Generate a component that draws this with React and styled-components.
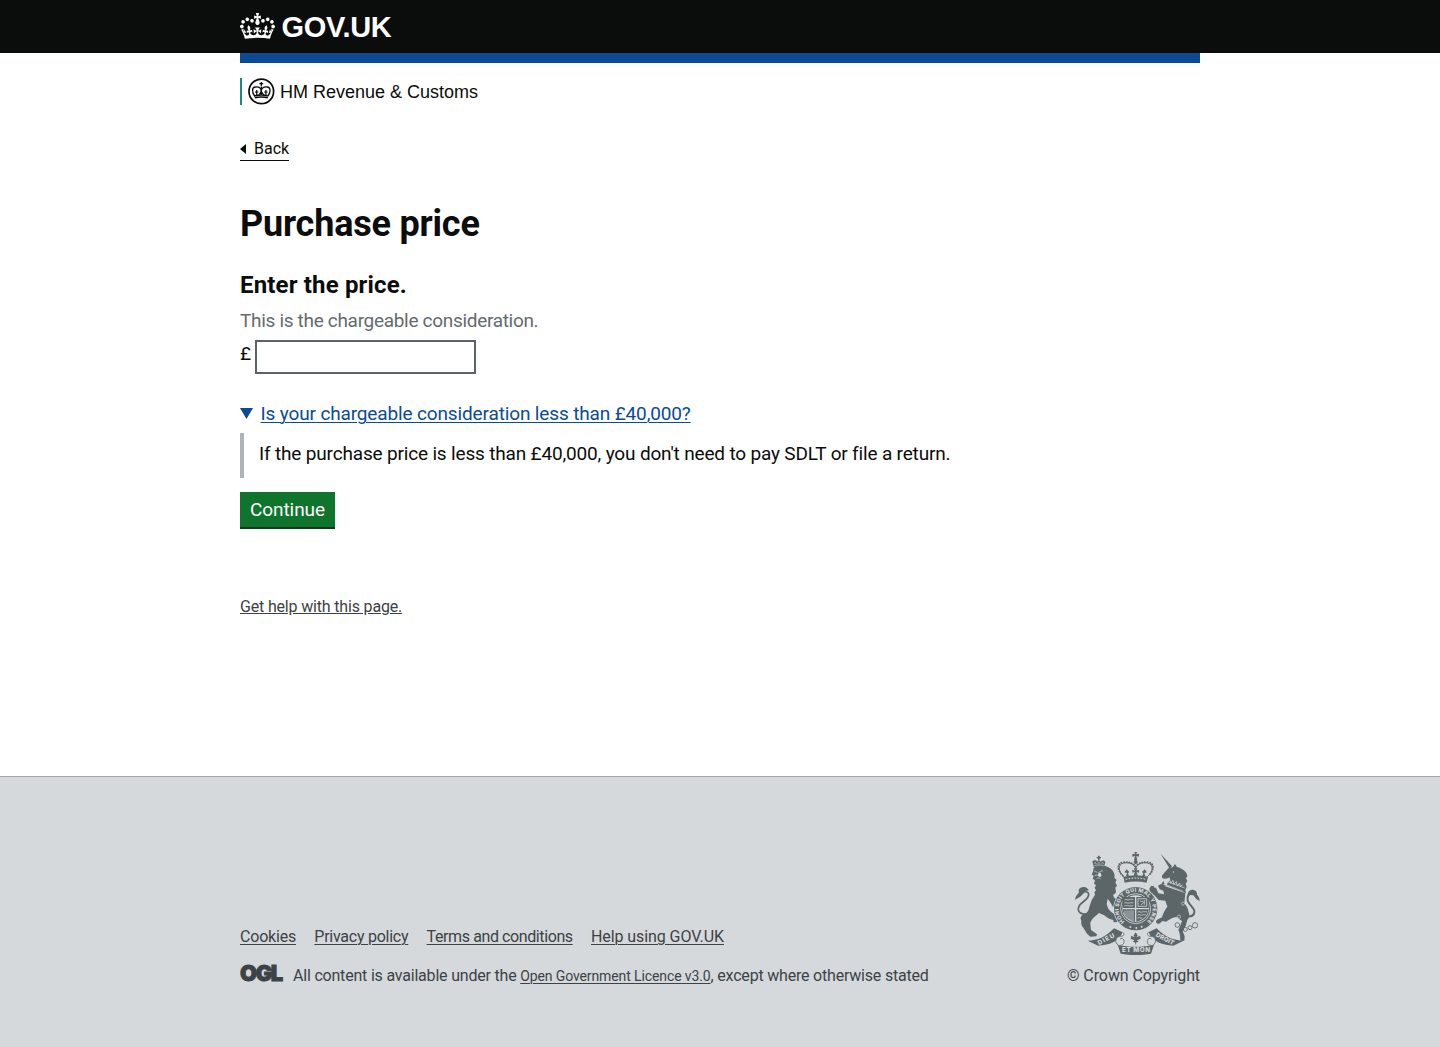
import React from 'react';
import styled, { createGlobalStyle } from 'styled-components';

const GlobalStyle = createGlobalStyle`
  *, *::before, *::after { box-sizing: border-box; }
  body {
    margin: 0;
    background: #fff;
    color: #0b0c0c;
    font-family: Roboto, "Liberation Sans", sans-serif;
    -webkit-font-smoothing: antialiased;
  }
  h1, h2, p, ul { margin: 0; padding: 0; }
`;

const Page = styled.div`
  display: flex;
  flex-direction: column;
  min-height: 1047px;
`;

const Container = styled.div`
  width: 960px;
  margin: 0 auto;
`;

const Header = styled.header`
  height: 53px;
  background: #0b0c0c;
`;

const LogoLink = styled.a`
  display: flex;
  align-items: flex-start;
  gap: 6.5px;
  padding-top: 13px;
  color: #fff;
  text-decoration: none;
`;

const LogoText = styled.span`
  font: 700 29px/28px "Liberation Sans", Arial, sans-serif;
  letter-spacing: -0.3px;
`;

const BlueBar = styled.div`
  height: 10px;
  background: #0b4b94;
`;

const Organisation = styled.div`
  display: flex;
  align-items: center;
  gap: 5px;
  height: 27px;
  margin-top: 15px;
  padding-left: 6px;
  border-left: 2px solid #1a8a83;
`;

const OrganisationName = styled.span`
  padding-top: 2px;
  font: 400 18px/25px "Liberation Sans", Arial, sans-serif;
`;

const BackLink = styled.a`
  display: inline-flex;
  align-items: center;
  gap: 8px;
  height: 24px;
  margin-top: 32px;
  border-bottom: 1px solid #0b0c0c;
  color: #0b0c0c;
  font-size: 16px;
  line-height: 22px;
  text-decoration: none;
`;

const Arrow = styled.span`
  width: 0;
  height: 0;
  border: 5px solid transparent;
  border-right: 6px solid #0b0c0c;
  border-left-width: 0;
`;

const Title = styled.h1`
  margin-top: 43px;
  font-size: 36px;
  line-height: 40px;
  letter-spacing: -0.2px;
`;

const Question = styled.h2`
  margin-top: 26px;
  font-size: 24px;
  line-height: 30px;
  letter-spacing: 0.16px;
`;

const Hint = styled.p`
  margin-top: 8px;
  color: #646b6f;
  font-size: 19px;
  line-height: 25px;
  letter-spacing: -0.31px;
`;

const PriceField = styled.label`
  display: flex;
  gap: 5px;
  height: 34px;
  margin-top: 7px;
  font-size: 19px;
  line-height: 28px;
`;

const Currency = styled.span`
  width: 10px;
`;

const PriceInput = styled.input`
  width: 221px;
  height: 34px;
  padding: 4px;
  border: 2px solid #5a6468;
  border-radius: 0;
  background: #fff;
  font: inherit;
  outline: 0;
`;

const Summary = styled.div`
  display: flex;
  align-items: center;
  gap: 7.5px;
  height: 25px;
  margin-top: 27px;
  color: #0b4b94;
  font-size: 19px;
  line-height: 25px;
  letter-spacing: -0.14px;
`;

const DownArrow = styled.span`
  width: 13px;
  height: 11px;
  background: #0b4b94;
  clip-path: polygon(0 0, 100% 0, 50% 100%);
`;

const SummaryText = styled.span`
  text-decoration: underline;
  text-decoration-thickness: 1px;
  text-underline-offset: 2px;
`;

const DetailsPanel = styled.div`
  height: 45px;
  margin-top: 7px;
  padding: 8px 0 0 15px;
  border-left: 4px solid #afb3b6;
  font-size: 19px;
  line-height: 25px;
  letter-spacing: -0.17px;
`;

const ContinueButton = styled.button`
  display: block;
  width: 95px;
  height: 35px;
  margin-top: 14px;
  padding: 0;
  border: 0;
  background: #0f752c;
  box-shadow: 0 2px 0 #0a3c18;
  color: #fff;
  font: 400 19px/35px Roboto, sans-serif;
  letter-spacing: -0.08px;
`;

const HelpLink = styled.a`
  display: inline-block;
  margin-top: 70px;
  color: #3c4245;
  font-size: 16px;
  line-height: 20px;
  letter-spacing: -0.17px;
  text-decoration: underline;
  text-underline-offset: 1px;
`;

const Footer = styled.footer`
  height: 271px;
  margin-top: auto;
  border-top: 1px solid #a1a6a9;
  background: #d5d9dc;
  color: #3c4245;
  font-size: 16px;
  line-height: 20px;
`;

const FooterInner = styled(Container)`
  display: flex;
  justify-content: space-between;
  align-items: flex-end;
  height: 209px;
`;

const FooterLinks = styled.nav`
  display: flex;
  gap: 18.3px;
  margin-bottom: 16px;
`;

const FooterLink = styled.a`
  color: inherit;
  letter-spacing: ${(p) => p.$tracking || 0}px;
  text-decoration: underline;
  text-decoration-thickness: 1px;
  text-underline-offset: 2px;
`;

const Licence = styled.div`
  display: flex;
  align-items: baseline;
  height: 20px;
  margin-bottom: 3px;
  letter-spacing: -0.2px;
  white-space: pre;
`;

const OglMark = styled.span`
  width: 53px;
  font: 900 22px/20px Inter, sans-serif;
  letter-spacing: -1.4px;
  -webkit-text-stroke: 0.9px #3c4245;
`;

const SmallLink = styled(FooterLink)`
  font-size: 14px;
`;

const Copyright = styled.div`
  display: flex;
  flex-direction: column;
  align-items: flex-end;
  gap: 11px;
  letter-spacing: -0.09px;
`;

const CROWN =
  'M25 30.2c3.5 1.5 7.7-.2 9.1-3.7 1.5-3.6-.2-7.8-3.9-9.2-3.6-1.4-7.6.3-9.1 3.9-1.4 3.5.3 7.5 3.9 9zM9 39.5c3.6 1.5 7.8-.2 9.2-3.7 1.5-3.6-.2-7.8-3.9-9.1-3.6-1.5-7.6.2-9.1 3.8-1.4 3.5.3 7.5 3.8 9zM4.4 57.2c3.5 1.5 7.7-.2 9.1-3.8 1.5-3.6-.2-7.7-3.9-9.1-3.5-1.5-7.6.3-9.1 3.8-1.4 3.5.3 7.6 3.9 9.1zm38.3-21.4c3.5 1.5 7.7-.2 9.1-3.8 1.5-3.6-.2-7.7-3.9-9.1-3.6-1.5-7.6.3-9.1 3.8-1.3 3.6.4 7.7 3.9 9.1zm64.4-5.6c-3.6 1.5-7.8-.2-9.1-3.7-1.5-3.6.2-7.8 3.8-9.2 3.6-1.4 7.7.3 9.2 3.9 1.3 3.5-.4 7.5-3.9 9zm15.9 9.3c-3.6 1.5-7.7-.2-9.1-3.7-1.5-3.6.2-7.8 3.7-9.1 3.6-1.5 7.7.2 9.2 3.8 1.5 3.5-.3 7.5-3.8 9zm4.7 17.7c-3.6 1.5-7.8-.2-9.2-3.8-1.5-3.6.2-7.7 3.9-9.1 3.6-1.5 7.7.3 9.2 3.8 1.3 3.5-.4 7.6-3.9 9.1zM89.3 35.8c-3.6 1.5-7.8-.2-9.2-3.8-1.4-3.6.2-7.7 3.9-9.1 3.6-1.5 7.7.3 9.2 3.8 1.4 3.6-.3 7.7-3.9 9.1zM69.7 17.7l8.9 4.7V9.3l-8.9 2.8c-.2-.3-.5-.6-.9-.9L72.4 0H59.6l3.5 11.2c-.3.3-.6.5-.9.9l-8.8-2.8v13.1l8.8-4.7c.3.3.6.7.9.9l-5 15.4v.1c-.2.8-.4 1.6-.4 2.4 0 4.1 3.1 7.5 7 8.1h.2c.3 0 .7.1 1 .1.4 0 .7 0 1-.1h.2c4-.6 7.1-4.1 7.1-8.1 0-.8-.1-1.7-.4-2.4V34l-5.1-15.4c.4-.2.7-.6 1-.9zM66 92.8c16.9 0 32.8 1.1 47.1 3.2 4-16.9 8.9-26.7 14-33.5l-9.6-3.4c1 4.9 1.1 7.2 0 10.2-1.5-1.4-3-4.3-4.2-8.7L108.6 76c2.8-2 5-3.2 7.5-3.3-4.4 9.4-10 11.9-13.6 11.2-4.3-.8-6.3-4.6-5.6-7.9 1-4.7 5.7-5.9 8-.5 4.3-8.7-3-11.4-7.6-8.8 7.1-7.2 7.9-13.5 2.1-21.1-8 6.1-8.1 12.3-4.5 20.8-4.7-5.4-12.1-2.5-9.5 6.2 3.4-5.2 7.9-2 7.2 3.1-.6 4.3-6.4 7.8-13.5 7.2-10.3-.9-10.9-8-11.2-13.8 2.5-.5 7.1 1.8 11 7.3L80.2 60c-4.1 4.4-8 5.3-12.3 5.4 1.4-4.4 8-11.6 8-11.6H55.5s6.4 7.2 7.9 11.6c-4.2-.1-8-1-12.3-5.4l1.4 16.4c3.9-5.5 8.5-7.7 10.9-7.3-.3 5.8-.9 12.8-11.1 13.8-7.2.6-12.9-2.9-13.5-7.2-.7-5 3.8-8.3 7.1-3.1 2.7-8.7-4.6-11.6-9.4-6.2 3.7-8.5 3.6-14.7-4.6-20.8-5.8 7.6-5 13.9 2.2 21.1-4.7-2.6-11.9.1-7.7 8.8 2.3-5.5 7.1-4.2 8.1.5.7 3.3-1.3 7.1-5.7 7.9-3.5.7-9-1.8-13.5-11.2 2.5.1 4.7 1.3 7.5 3.3l-4.7-15.4c-1.2 4.4-2.7 7.2-4.3 8.7-1.1-3-.9-5.3 0-10.2l-9.5 3.4c5 6.9 9.9 16.7 14 33.5 14.8-2.1 30.8-3.2 47.7-3.2z';

const Crown = () => (
  <svg width="35" height="26" viewBox="0 0 132 97" preserveAspectRatio="none" aria-hidden="true">
    <path d={CROWN} fill="#fff" />
  </svg>
);

const HmrcCrest = () => (
  <svg width="27" height="27" viewBox="0 0 27 27" aria-hidden="true" fill="none" stroke="#0b0c0c">
    <circle cx="13.3" cy="13.4" r="12.3" strokeWidth="1.7" />
    <path d="M13.3 4v4M11.4 5.6h3.8M13.3 8.5v8" strokeWidth="1.3" />
    <path
      d="M7 18.5C3.6 14 3.9 9.6 7 9c3.2-.5 5.6.8 6.300 3.200.7-2.400 3.100-3.700 6.300-3.200 3.100.6 3.400 5 0 9.500"
      strokeWidth="1.3"
    />
    <path d="M6.800 19.800c4.200-1 8.800-1 13 0M7 17.800c4-.9 8.600-.9 12.600 0" strokeWidth="1.500" />
    <path
      d="M8.700 12v5m-1.700-3h3.400M17.900 12v5m-1.700-3h3.400M10.800 17l2.500-3.500 2.500 3.500M13.300 12v5"
      strokeWidth="1.200"
    />
  </svg>
);

const INK = '#5c6669';
const PAPER = '#d5d9dc';

const RoyalArms = () => (
  <svg width="125" height="103" viewBox="45 35 375 309" aria-hidden="true">
    <defs>
      <path id="garter" d="M194 244A51 51 0 1 1 260 244" />
    </defs>
    {/* lion */}
    <g fill={INK}>
      <path d="M101 83c9-7 30-9 43-3 12 5 17 14 20 24l-1 8 7 7-4 7 5 10-5 6 2 12c-2 6-5 8-9 9l4 11c8 0 16 8 18 16 1 7-4 14-8 15l-8-10-6 5-7-12-9-13-3 16c2 12 9 22 19 28 9 6 16 14 14 26l-12 1-1-7c-11-2-20-7-27-14l-16-7-18 16c-4 6-9 11-8 18l2 17 18 13-2 6-18 1-10-9-11-18c-6-5-7-13-6-22-6-8 1-16 9-19 9-3 14-11 15-21l7-20 10-17-2-7 5-6-4-7 4-8-6-5 3-10-7-5 3-8-6-5 4-8z" />
      <path d="M102 82 97 64c5-6 12-5 15 0 1-5 8-5 10 0 4-5 11-4 14 1l-4 16c-10-3-20-3-30 1z" />
      <path d="M114 46h5v14h-5zM110 50h13v4h-13z" />
      <path
        d="M80 222c-18 0-30-8-23-24 6-14 28-18 29-35 0-11-13-11-19-4"
        fill="none"
        stroke={INK}
        strokeWidth="5"
      />
      <path d="M45 178c2-12 8-15 12-22-4-8 2-15 14-16 7-1 13 5 16 11-8-1-14 2-17 8-5 9-14 14-25 19z" />
    </g>
    <g fill="none" stroke={PAPER} strokeWidth="2">
      <path d="m103 93 9 3m7-2 10-3m-12 4-2 11m-11 0c6-4 13-2 19 2M110 114c5-2 9-1 12 1" />
      <path d="M103 76c9-3 19-3 28 0M103 70l3-4 3 5M114 70l3-4 3 4M125 70l3-4 3 4" />
    </g>
    <path d="M117 97h5l3 10-6 3-5-3z" fill={PAPER} />
    {/* unicorn */}
    <g fill={INK}>
      <path d="m302 40 34 38-7 7z" />
      <path d="m338 81 7-10 6 9c17 4 30 15 31 27l-4 7 4 8-5 8 3 9-4 10 2 10-58-24 3-8c5-5 8-11 6-16l-6 3-9 1c-9 1-10-8-5-13l12-14c2-4 8-6 17-7z" />
      <path d="m312 136 64 23-3 30c7 8 11 15 12 24 5 10 4 18-3 26l-5 18-9 16 6 15-1 13-12 1-1-17-4-16 10-27-17-12c-10 1-20 7-31 14l-11-2-7 7c-9 4-16-5-9-11l15-7c4-13 9-23 16-32l-6-18-20-2-17-19c-9-3-14-12-8-20l17 2 7 17 17 3-2-11-11-4-5-11c8-6 18-2 26 0z" />
      <path
        d="M384 228c18 2 25-14 13-27-13-14-20-25-12-36 7-9 20-8 24 6"
        fill="none"
        stroke={INK}
        strokeWidth="6"
      />
      <path d="M419 182c-11-4-15-11-18-17-6 0-12-3-17 3-3-10 2-18 13-20 10 0 15 7 14 15 5 5 8 11 8 19z" />
      <path d="m283 138-12-2 7 12zM284 151l-6 13 10-4zM304 131l6-9 4 10z" />
    </g>
    <g fill="none" stroke={PAPER}>
      <path d="m318 133 52 20M322 124l52 19" strokeWidth="2" />
      <path d="m324 126 5-9 3 12 7-9 3 12 7-8 3 12 7-8 2 11 7-6" strokeWidth="2.4" />
      <circle cx="340" cy="95" r="1.2" strokeWidth="2" />
    </g>
    <g fill="none" stroke={INK} strokeWidth="2.6">
      <circle cx="306" cy="138" r="6" />
      <circle cx="352" cy="254" r="7" />
      <circle cx="363" cy="269" r="6" />
      <circle cx="376" cy="267" r="6" />
      <circle cx="390" cy="262" r="6" />
      <circle cx="405" cy="255" r="8" />
    </g>
    <g fill="none" stroke={PAPER} strokeWidth="2">
      <circle cx="357" cy="229" r="5" />
      <path d="m369 184 5 6-5 6-5-6z" />
    </g>
    {/* shield and garter */}
    <circle cx="227" cy="205" r="67" fill={PAPER} />
    <circle cx="227" cy="205" r="65" fill={INK} />
    <circle cx="227" cy="205" r="45" fill="none" stroke={PAPER} strokeWidth="2.5" />
    <text fill={PAPER} fontFamily="Inter, sans-serif" fontSize="16" fontWeight="800">
      <textPath href="#garter" textLength="248">
        HONI SOIT QUI MAL Y PENSE
      </textPath>
    </text>
    <circle cx="227" cy="205" r="40" fill={PAPER} />
    <path
      d="M190 170h35v33h-37c-1-12-1-22 2-33zM229 170h35c3 11 3 21 2 33h-37zM188 207h37v37c-20-4-34-16-37-37zM229 207h37c-3 21-17 33-37 37z"
      fill={INK}
    />
    <g fill="none" stroke={PAPER} strokeWidth="2.4">
      <path d="M194 179c5-5 9 3 14-1s8 1 12-1M193 188c6-4 11 3 15 0s8 1 12-1M193 197c6-4 11 2 27-1" />
      <path d="M233 215c5-4 9 3 14 0s8 1 14-1M233 224c6-4 11 3 15 0s6 1 9-1M233 233c5-3 9 2 14 0" />
      <path d="M234 175h26v23h-26zM240 181c4 4 8 0 10 4s-4 5-7 9M253 179v14M195 210v16M201 210v24M207 210v29M213 210v31M219 210v32" />
    </g>
    <g fill={PAPER}>
      <circle cx="211" cy="260" r="3" />
      <circle cx="229" cy="263" r="3" />
      <circle cx="245" cy="259" r="3" />
    </g>
    {/* royal crown */}
    <path d="M184 100h86l-8 30c-23-7-47-7-70 0z" fill={PAPER} />
    <g fill={INK}>
      <path d="m223 35h8l-2 7 8-2v9l-8-2 3 13h-10l3-13-8 2v-9l8 2z" />
      <circle cx="227" cy="65" r="6" />
      <path d="M190 109c25-6 49-6 74 0l-4 18c-22-5-44-5-66 0z" />
      <path d="m221 106 3-11-7 2v-9l7 3-2-7h10l-2 7 7-3v9l-7-2 3 11zM198 107l3-9-8-2 7-9 8 8-4 4 3 8zM256 107l-3-9 8-2-7-9-8 8 4 4-3 8z" />
    </g>
    <path
      d="M192 109c-19-16-19-37-1-41 18-3 31 3 36 16M262 109c19-16 19-37 1-41-18-3-31 3-36 16"
      fill="none"
      stroke={INK}
      strokeWidth="3"
    />
    <path
      d="M188 106c-17-17-18-37 1-40 17-2 30 2 38 12 8-10 21-14 38-12 19 3 18 23 1 40"
      fill="none"
      stroke={INK}
      strokeDasharray="0.1 7.6"
      strokeLinecap="round"
      strokeWidth="6"
    />
    <path d="M197 117c20-5 40-5 60 0" fill="none" stroke={PAPER} strokeDasharray="5 4" strokeWidth="3" />
    {/* motto ribbon */}
    <g fill={INK}>
      <path d="M83 301c30 0 54-11 79-37l26 12c-9 24-37 40-74 40z" />
      <path d="M371 301c-30 0-57-11-81-37l-25 12c9 24 40 40 75 40z" />
      <path d="M173 313c36 8 73 8 109 0l-9 27c-30 6-61 6-91 0z" />
    </g>
    <g fill={PAPER} stroke={INK} strokeWidth="2.5">
      <path d="M188 276c7 4 4 12-6 12-12 0-16 8-14 18l6 9c12 2 20-4 18-14-1-7-8-9-12-5" />
      <path d="M266 276c-7 4-4 12 6 12 12 0 16 8 14 18l-6 9c-12 2-20-4-18-14 1-7 8-9 12-5" />
    </g>
    <path
      d="m227 276 6 9-3 6 10-5 2 9-11 5 5 5-7 1-2 9-2-9-7-1 5-5-11-5 2-9 10 5-3-6z"
      fill={INK}
    />
    <g fill={PAPER} fontFamily="Inter, sans-serif" fontWeight="800" fontSize="19" textAnchor="middle">
      <text transform="translate(141 302) rotate(-28)" textLength="54">DIEU</text>
      <text transform="translate(228 335)" textLength="84">ET MON</text>
      <text transform="translate(312 301) rotate(28)" textLength="60">DROIT</text>
    </g>
  </svg>
);

export default function App() {
  return (
    <Page>
      <GlobalStyle />
      <Header>
        <Container>
          <LogoLink>
            <Crown />
            <LogoText>GOV.UK</LogoText>
          </LogoLink>
        </Container>
      </Header>
      <Container>
        <BlueBar />
        <Organisation>
          <HmrcCrest />
          <OrganisationName>HM Revenue &amp; Customs</OrganisationName>
        </Organisation>
        <BackLink>
          <Arrow />
          Back
        </BackLink>
        <Title>Purchase price</Title>
        <Question>Enter the price.</Question>
        <Hint>This is the chargeable consideration.</Hint>
        <PriceField>
          <Currency>£</Currency>
          <PriceInput type="text" />
        </PriceField>
        <Summary>
          <DownArrow />
          <SummaryText>Is your chargeable consideration less than £40,000?</SummaryText>
        </Summary>
        <DetailsPanel>
          If the purchase price is less than £40,000, you don't need to pay SDLT or file a return.
        </DetailsPanel>
        <ContinueButton>Continue</ContinueButton>
        <HelpLink>Get help with this page.</HelpLink>
      </Container>
      <Footer>
        <FooterInner>
          <div>
            <FooterLinks>
              <FooterLink $tracking={-0.2}>Cookies</FooterLink>
              <FooterLink $tracking={-0.25}>Privacy policy</FooterLink>
              <FooterLink $tracking={-0.4}>Terms and conditions</FooterLink>
              <FooterLink $tracking={-0.08}>Help using GOV.UK</FooterLink>
            </FooterLinks>
            <Licence>
              <OglMark>OGL</OglMark>
              {'All content is available under the '}
              <SmallLink $tracking={-0.11}>Open Government Licence v3.0</SmallLink>
              {', except where otherwise stated'}
            </Licence>
          </div>
          <Copyright>
            <RoyalArms />
            <span>© Crown Copyright</span>
          </Copyright>
        </FooterInner>
      </Footer>
    </Page>
  );
}
